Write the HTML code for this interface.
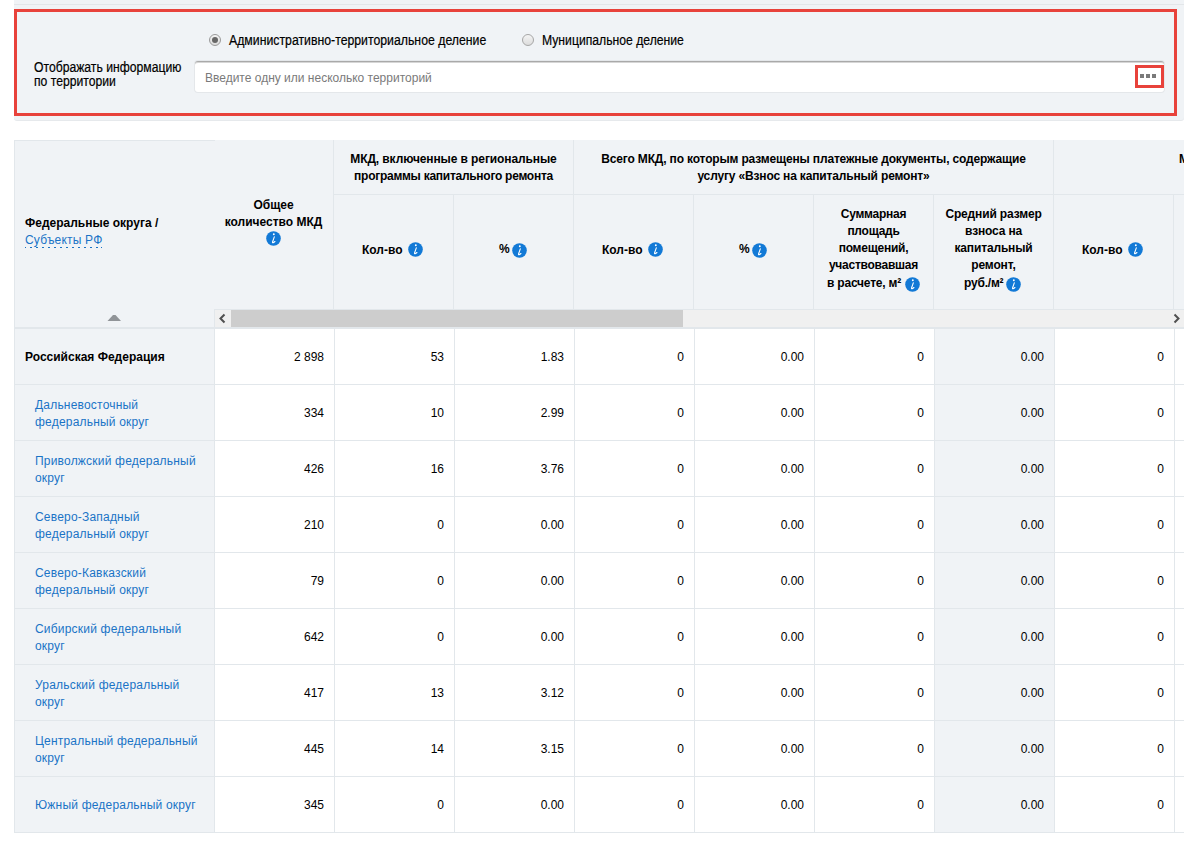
<!DOCTYPE html><html><head><meta charset="utf-8"><style>
*{margin:0;padding:0;box-sizing:border-box}
html,body{width:1195px;height:842px;overflow:hidden;background:#fff}
body{position:relative;font-family:"Liberation Sans",sans-serif;font-size:12px;color:#000}
.a{position:absolute}
.t{position:absolute;white-space:nowrap;line-height:17px}
.b{font-weight:bold}
.ic{position:absolute}
.cond{position:absolute;white-space:nowrap;font-size:14px;line-height:14px;transform:scaleX(0.87);transform-origin:0 0;color:#000;-webkit-text-stroke:0.2px #000}
.num{position:absolute;white-space:nowrap;text-align:right;line-height:14px}
.lnk{color:#1a73c6;letter-spacing:0.2px}
</style></head><body>
<div class="a" style="left:14px;top:0;width:1170px;height:120px;background:#f0f3f6;border-radius:0 0 3px 3px;box-shadow:0 1px 0 #e6e9ec"></div>
<div class="a" style="left:14px;top:4px;width:1170px;height:1px;background:#e3e6e9"></div>
<div class="a" style="left:14px;top:9px;width:1163px;height:107px;border:3px solid #e8423b"></div>
<div class="a" style="left:209px;top:34px;width:12px;height:12px;border-radius:50%;background:linear-gradient(#f4f4f4,#dcdcdc);border:1px solid #9a9a9a"></div>
<div class="a" style="left:212px;top:37px;width:6px;height:6px;border-radius:50%;background:#676767"></div>
<div class="a" style="left:522px;top:34px;width:12px;height:12px;border-radius:50%;background:linear-gradient(#f4f4f4,#dcdcdc);border:1px solid #a6a6a6"></div>
<div class="cond" style="left:229px;top:33px;transform:scaleX(0.877)">Административно-территориальное деление</div>
<div class="cond" style="left:542px;top:33px">Муниципальное деление</div>
<div class="cond" style="left:34px;top:60px">Отображать информацию<br>по территории</div>
<div class="a" style="left:195px;top:61px;width:969px;height:31px;background:#fff;border-radius:3px;border-top:1px solid #a9a9a9;box-shadow:inset 0 1px 0 #d6d6d6,0 0 0 1px #e4e7ea"></div>
<div class="t" style="left:205px;top:71px;color:#7a7a7a;line-height:14px">Введите одну или несколько территорий</div>
<div class="a" style="left:1135px;top:65px;width:29px;height:23px;border:3px solid #e8423b"></div>
<div class="a" style="left:1140px;top:74px;width:4px;height:4px;background:#7a7a7a"></div>
<div class="a" style="left:1146px;top:74px;width:4px;height:4px;background:#7a7a7a"></div>
<div class="a" style="left:1152px;top:74px;width:4px;height:4px;background:#7a7a7a"></div>
<div class="a" style="left:14px;top:140px;width:1170px;height:188px;background:#f0f3f6"></div>
<div class="a" style="left:14px;top:140px;width:201px;height:1px;background:#e2e7eb"></div>
<div class="a" style="left:14px;top:140px;width:1px;height:693px;background:#e2e7eb"></div>
<div class="a" style="left:215px;top:328px;width:969px;height:504px;background:#fff"></div>
<div class="a" style="left:15px;top:328px;width:199px;height:504px;background:#f0f3f6"></div>
<div class="a" style="left:935px;top:328px;width:119px;height:504px;background:#f0f3f6"></div>
<div class="a" style="left:334px;top:194px;width:850px;height:1px;background:#e2e7eb"></div>
<div class="a" style="left:333px;top:140px;width:1px;height:169px;background:#e2e7eb"></div>
<div class="a" style="left:573px;top:140px;width:1px;height:169px;background:#e2e7eb"></div>
<div class="a" style="left:1053px;top:140px;width:1px;height:169px;background:#e2e7eb"></div>
<div class="a" style="left:453px;top:195px;width:1px;height:114px;background:#e2e7eb"></div>
<div class="a" style="left:693px;top:195px;width:1px;height:114px;background:#e2e7eb"></div>
<div class="a" style="left:813px;top:195px;width:1px;height:114px;background:#e2e7eb"></div>
<div class="a" style="left:933px;top:195px;width:1px;height:114px;background:#e2e7eb"></div>
<div class="a" style="left:1173px;top:195px;width:1px;height:114px;background:#e2e7eb"></div>
<div class="a" style="left:214px;top:309px;width:970px;height:1px;background:#e2e7eb"></div>
<div class="a" style="left:214px;top:309px;width:1px;height:19px;background:#e2e7eb"></div>
<div class="a" style="left:215px;top:310px;width:969px;height:17px;background:#f0f0f0"></div>
<div class="a" style="left:231px;top:310px;width:452px;height:17px;background:#cdcdcd"></div>
<svg class="a" style="left:215px;top:310px" width="16" height="17" viewBox="0 0 16 17"><path d="M9.5 4.5 L5.5 8.5 L9.5 12.5" stroke="#505050" stroke-width="2" fill="none"/></svg>
<svg class="a" style="left:1168px;top:310px" width="16" height="17" viewBox="0 0 16 17"><path d="M6.5 4.5 L10.5 8.5 L6.5 12.5" stroke="#505050" stroke-width="2" fill="none"/></svg>
<div class="a" style="left:14px;top:327px;width:1170px;height:2px;background:#e2e7eb"></div>
<svg class="a" style="left:107px;top:314px" width="15" height="8" viewBox="0 0 15 8"><path d="M0.5 7 L6 1 L8.5 1 L14 7 Z" fill="#909498"/></svg>
<div class="t b" style="left:25px;top:215px">Федеральные округа /</div>
<div class="t lnk" style="left:25px;top:232px">Субъекты РФ</div>
<div class="a" style="left:25px;top:247px;width:77px;height:1px;background:repeating-linear-gradient(90deg,#1a73c6 0 2px,transparent 2px 6px);background-position:-1px 0"></div>
<div class="t b" style="left:214px;width:119px;text-align:center;top:197px">Общее<br>количество МКД</div>
<svg class="ic" style="left:266px;top:231px" width="15" height="15" viewBox="0 0 15 15"><circle cx="7.5" cy="7.5" r="7.3" fill="#1279d6"/><ellipse cx="7.8" cy="3.3" rx="0.95" ry="1.0" fill="#fff"/><path d="M8.3 5.8 Q7.3 8.8 6.6 10.8 Q6.3 11.9 7.2 11.7 Q8.0 11.4 8.9 10.5" stroke="#fff" stroke-width="1.1" fill="none" stroke-linecap="round"/></svg>
<div class="t b" style="left:334px;width:239px;text-align:center;top:151px;letter-spacing:-0.1px">МКД, включенные в региональные</div>
<div class="t b" style="left:334px;width:239px;text-align:center;top:168px;letter-spacing:-0.27px">программы капитального ремонта</div>
<div class="t b" style="left:574px;width:479px;text-align:center;top:151px;letter-spacing:-0.16px">Всего МКД, по которым размещены платежные документы, содержащие<br>услугу «Взнос на капитальный ремонт»</div>
<div class="t b" style="left:1179px;top:151px">МКД</div>
<div class="t b" style="left:362px;top:242px">Кол-во</div><svg class="ic" style="left:408px;top:242px" width="15" height="15" viewBox="0 0 15 15"><circle cx="7.5" cy="7.5" r="7.3" fill="#1279d6"/><ellipse cx="7.8" cy="3.3" rx="0.95" ry="1.0" fill="#fff"/><path d="M8.3 5.8 Q7.3 8.8 6.6 10.8 Q6.3 11.9 7.2 11.7 Q8.0 11.4 8.9 10.5" stroke="#fff" stroke-width="1.1" fill="none" stroke-linecap="round"/></svg>
<div class="t b" style="left:499px;top:241px">%</div><svg class="ic" style="left:512px;top:243px" width="15" height="15" viewBox="0 0 15 15"><circle cx="7.5" cy="7.5" r="7.3" fill="#1279d6"/><ellipse cx="7.8" cy="3.3" rx="0.95" ry="1.0" fill="#fff"/><path d="M8.3 5.8 Q7.3 8.8 6.6 10.8 Q6.3 11.9 7.2 11.7 Q8.0 11.4 8.9 10.5" stroke="#fff" stroke-width="1.1" fill="none" stroke-linecap="round"/></svg>
<div class="t b" style="left:602px;top:242px">Кол-во</div><svg class="ic" style="left:648px;top:242px" width="15" height="15" viewBox="0 0 15 15"><circle cx="7.5" cy="7.5" r="7.3" fill="#1279d6"/><ellipse cx="7.8" cy="3.3" rx="0.95" ry="1.0" fill="#fff"/><path d="M8.3 5.8 Q7.3 8.8 6.6 10.8 Q6.3 11.9 7.2 11.7 Q8.0 11.4 8.9 10.5" stroke="#fff" stroke-width="1.1" fill="none" stroke-linecap="round"/></svg>
<div class="t b" style="left:739px;top:241px">%</div><svg class="ic" style="left:752px;top:243px" width="15" height="15" viewBox="0 0 15 15"><circle cx="7.5" cy="7.5" r="7.3" fill="#1279d6"/><ellipse cx="7.8" cy="3.3" rx="0.95" ry="1.0" fill="#fff"/><path d="M8.3 5.8 Q7.3 8.8 6.6 10.8 Q6.3 11.9 7.2 11.7 Q8.0 11.4 8.9 10.5" stroke="#fff" stroke-width="1.1" fill="none" stroke-linecap="round"/></svg>
<div class="t b" style="left:1082px;top:242px">Кол-во</div><svg class="ic" style="left:1128px;top:242px" width="15" height="15" viewBox="0 0 15 15"><circle cx="7.5" cy="7.5" r="7.3" fill="#1279d6"/><ellipse cx="7.8" cy="3.3" rx="0.95" ry="1.0" fill="#fff"/><path d="M8.3 5.8 Q7.3 8.8 6.6 10.8 Q6.3 11.9 7.2 11.7 Q8.0 11.4 8.9 10.5" stroke="#fff" stroke-width="1.1" fill="none" stroke-linecap="round"/></svg>
<div class="t b" style="left:814px;width:119px;text-align:center;top:206px;letter-spacing:-0.25px">Суммарная<br>площадь<br>помещений,<br>участвовавшая</div>
<div class="t b" style="left:827px;top:275px;letter-spacing:-0.2px">в расчете, м²</div>
<svg class="ic" style="left:905px;top:277px" width="15" height="15" viewBox="0 0 15 15"><circle cx="7.5" cy="7.5" r="7.3" fill="#1279d6"/><ellipse cx="7.8" cy="3.3" rx="0.95" ry="1.0" fill="#fff"/><path d="M8.3 5.8 Q7.3 8.8 6.6 10.8 Q6.3 11.9 7.2 11.7 Q8.0 11.4 8.9 10.5" stroke="#fff" stroke-width="1.1" fill="none" stroke-linecap="round"/></svg>
<div class="t b" style="left:934px;width:119px;text-align:center;top:206px;letter-spacing:-0.15px">Средний размер<br>взноса на<br>капитальный<br>ремонт,</div>
<div class="t b" style="left:964px;top:275px;letter-spacing:-0.2px">руб./м²</div>
<svg class="ic" style="left:1006px;top:277px" width="15" height="15" viewBox="0 0 15 15"><circle cx="7.5" cy="7.5" r="7.3" fill="#1279d6"/><ellipse cx="7.8" cy="3.3" rx="0.95" ry="1.0" fill="#fff"/><path d="M8.3 5.8 Q7.3 8.8 6.6 10.8 Q6.3 11.9 7.2 11.7 Q8.0 11.4 8.9 10.5" stroke="#fff" stroke-width="1.1" fill="none" stroke-linecap="round"/></svg>
<div class="a" style="left:14px;top:384px;width:1170px;height:1px;background:#e2e7eb"></div>
<div class="t b" style="left:25px;top:349px">Российская Федерация</div>
<div class="num" style="left:224px;width:100px;top:350px">2 898</div>
<div class="num" style="left:344px;width:100px;top:350px">53</div>
<div class="num" style="left:464px;width:100px;top:350px">1.83</div>
<div class="num" style="left:584px;width:100px;top:350px">0</div>
<div class="num" style="left:704px;width:100px;top:350px">0.00</div>
<div class="num" style="left:824px;width:100px;top:350px">0</div>
<div class="num" style="left:944px;width:100px;top:350px">0.00</div>
<div class="num" style="left:1064px;width:100px;top:350px">0</div>
<div class="a" style="left:14px;top:440px;width:1170px;height:1px;background:#e2e7eb"></div>
<div class="t lnk" style="left:35px;top:397px">Дальневосточный<br>федеральный округ</div>
<div class="num" style="left:224px;width:100px;top:406px">334</div>
<div class="num" style="left:344px;width:100px;top:406px">10</div>
<div class="num" style="left:464px;width:100px;top:406px">2.99</div>
<div class="num" style="left:584px;width:100px;top:406px">0</div>
<div class="num" style="left:704px;width:100px;top:406px">0.00</div>
<div class="num" style="left:824px;width:100px;top:406px">0</div>
<div class="num" style="left:944px;width:100px;top:406px">0.00</div>
<div class="num" style="left:1064px;width:100px;top:406px">0</div>
<div class="a" style="left:14px;top:496px;width:1170px;height:1px;background:#e2e7eb"></div>
<div class="t lnk" style="left:35px;top:453px">Приволжский федеральный<br>округ</div>
<div class="num" style="left:224px;width:100px;top:462px">426</div>
<div class="num" style="left:344px;width:100px;top:462px">16</div>
<div class="num" style="left:464px;width:100px;top:462px">3.76</div>
<div class="num" style="left:584px;width:100px;top:462px">0</div>
<div class="num" style="left:704px;width:100px;top:462px">0.00</div>
<div class="num" style="left:824px;width:100px;top:462px">0</div>
<div class="num" style="left:944px;width:100px;top:462px">0.00</div>
<div class="num" style="left:1064px;width:100px;top:462px">0</div>
<div class="a" style="left:14px;top:552px;width:1170px;height:1px;background:#e2e7eb"></div>
<div class="t lnk" style="left:35px;top:509px">Северо-Западный<br>федеральный округ</div>
<div class="num" style="left:224px;width:100px;top:518px">210</div>
<div class="num" style="left:344px;width:100px;top:518px">0</div>
<div class="num" style="left:464px;width:100px;top:518px">0.00</div>
<div class="num" style="left:584px;width:100px;top:518px">0</div>
<div class="num" style="left:704px;width:100px;top:518px">0.00</div>
<div class="num" style="left:824px;width:100px;top:518px">0</div>
<div class="num" style="left:944px;width:100px;top:518px">0.00</div>
<div class="num" style="left:1064px;width:100px;top:518px">0</div>
<div class="a" style="left:14px;top:608px;width:1170px;height:1px;background:#e2e7eb"></div>
<div class="t lnk" style="left:35px;top:565px">Северо-Кавказский<br>федеральный округ</div>
<div class="num" style="left:224px;width:100px;top:574px">79</div>
<div class="num" style="left:344px;width:100px;top:574px">0</div>
<div class="num" style="left:464px;width:100px;top:574px">0.00</div>
<div class="num" style="left:584px;width:100px;top:574px">0</div>
<div class="num" style="left:704px;width:100px;top:574px">0.00</div>
<div class="num" style="left:824px;width:100px;top:574px">0</div>
<div class="num" style="left:944px;width:100px;top:574px">0.00</div>
<div class="num" style="left:1064px;width:100px;top:574px">0</div>
<div class="a" style="left:14px;top:664px;width:1170px;height:1px;background:#e2e7eb"></div>
<div class="t lnk" style="left:35px;top:621px">Сибирский федеральный<br>округ</div>
<div class="num" style="left:224px;width:100px;top:630px">642</div>
<div class="num" style="left:344px;width:100px;top:630px">0</div>
<div class="num" style="left:464px;width:100px;top:630px">0.00</div>
<div class="num" style="left:584px;width:100px;top:630px">0</div>
<div class="num" style="left:704px;width:100px;top:630px">0.00</div>
<div class="num" style="left:824px;width:100px;top:630px">0</div>
<div class="num" style="left:944px;width:100px;top:630px">0.00</div>
<div class="num" style="left:1064px;width:100px;top:630px">0</div>
<div class="a" style="left:14px;top:720px;width:1170px;height:1px;background:#e2e7eb"></div>
<div class="t lnk" style="left:35px;top:677px">Уральский федеральный<br>округ</div>
<div class="num" style="left:224px;width:100px;top:686px">417</div>
<div class="num" style="left:344px;width:100px;top:686px">13</div>
<div class="num" style="left:464px;width:100px;top:686px">3.12</div>
<div class="num" style="left:584px;width:100px;top:686px">0</div>
<div class="num" style="left:704px;width:100px;top:686px">0.00</div>
<div class="num" style="left:824px;width:100px;top:686px">0</div>
<div class="num" style="left:944px;width:100px;top:686px">0.00</div>
<div class="num" style="left:1064px;width:100px;top:686px">0</div>
<div class="a" style="left:14px;top:776px;width:1170px;height:1px;background:#e2e7eb"></div>
<div class="t lnk" style="left:35px;top:733px">Центральный федеральный<br>округ</div>
<div class="num" style="left:224px;width:100px;top:742px">445</div>
<div class="num" style="left:344px;width:100px;top:742px">14</div>
<div class="num" style="left:464px;width:100px;top:742px">3.15</div>
<div class="num" style="left:584px;width:100px;top:742px">0</div>
<div class="num" style="left:704px;width:100px;top:742px">0.00</div>
<div class="num" style="left:824px;width:100px;top:742px">0</div>
<div class="num" style="left:944px;width:100px;top:742px">0.00</div>
<div class="num" style="left:1064px;width:100px;top:742px">0</div>
<div class="a" style="left:14px;top:832px;width:1170px;height:1px;background:#e2e7eb"></div>
<div class="t lnk" style="left:35px;top:797px">Южный федеральный округ</div>
<div class="num" style="left:224px;width:100px;top:798px">345</div>
<div class="num" style="left:344px;width:100px;top:798px">0</div>
<div class="num" style="left:464px;width:100px;top:798px">0.00</div>
<div class="num" style="left:584px;width:100px;top:798px">0</div>
<div class="num" style="left:704px;width:100px;top:798px">0.00</div>
<div class="num" style="left:824px;width:100px;top:798px">0</div>
<div class="num" style="left:944px;width:100px;top:798px">0.00</div>
<div class="num" style="left:1064px;width:100px;top:798px">0</div>
<div class="a" style="left:214px;top:328px;width:1px;height:504px;background:#e2e7eb"></div>
<div class="a" style="left:334px;top:328px;width:1px;height:504px;background:#e2e7eb"></div>
<div class="a" style="left:454px;top:328px;width:1px;height:504px;background:#e2e7eb"></div>
<div class="a" style="left:574px;top:328px;width:1px;height:504px;background:#e2e7eb"></div>
<div class="a" style="left:694px;top:328px;width:1px;height:504px;background:#e2e7eb"></div>
<div class="a" style="left:814px;top:328px;width:1px;height:504px;background:#e2e7eb"></div>
<div class="a" style="left:934px;top:328px;width:1px;height:504px;background:#e2e7eb"></div>
<div class="a" style="left:1054px;top:328px;width:1px;height:504px;background:#e2e7eb"></div>
<div class="a" style="left:1174px;top:328px;width:1px;height:504px;background:#e2e7eb"></div>
<div class="a" style="left:1184px;top:130px;width:11px;height:712px;background:#fff"></div>
</body></html>
